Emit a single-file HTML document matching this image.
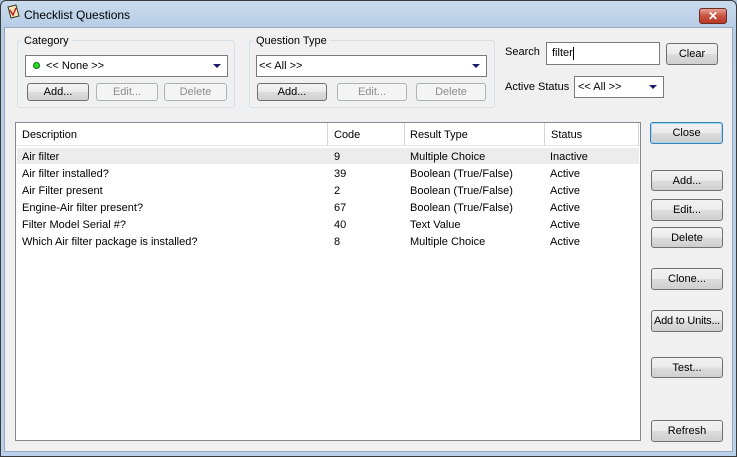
<!DOCTYPE html>
<html><head><style>
*{box-sizing:border-box;margin:0;padding:0}
body{width:737px;height:457px;overflow:hidden;font-family:"Liberation Sans",sans-serif;font-size:11px;color:#000;background:#a9c4de;position:relative}
.a{position:absolute}
#frame{left:0;top:0;width:737px;height:457px;border:1px solid #3a3a3a;border-radius:6px 6px 0 0;background:linear-gradient(#c9dbee,#b6cde6 27px,#b9d1ea)}
#client{left:4px;top:27px;width:729px;height:425px;background:#f0f0f0;border:1px solid #98a9bd}
.btn{position:absolute;border:1px solid #707070;border-radius:3px;background:linear-gradient(#f2f2f2 0,#ebebeb 50%,#dddddd 50%,#cfcfcf);text-align:center;font-size:11px;line-height:20px}
.dis{border-color:#adb2b5;background:#f4f4f4;color:#8d8d8d}
.grp{position:absolute;border:1px solid #d5dfe5;border-radius:3px}
.lbl{position:absolute;background:#f0f0f0;padding:0 3px;font-size:11px}
.combo{position:absolute;background:#fff;border:1px solid #7a7a7a;font-size:11px;line-height:21px;padding-left:5px}
.arr{position:absolute;right:6px;top:8px;width:0;height:0;border-left:4px solid transparent;border-right:4px solid transparent;border-top:4px solid #1a1a6a}
.row{position:absolute;left:17px;width:622px;height:17px;line-height:19px}
.row span{position:absolute}
.hd{position:absolute;top:0;height:23px;line-height:25px;border-right:1px solid #d5d5d5}
</style></head><body>
<div id="frame" class="a"></div>
<svg class="a" style="left:5px;top:4px" width="16" height="16" viewBox="0 0 16 16"><path d="M3 3 L11 1 L14 12 L6 14 Z" fill="#f3e7b5" stroke="#3b3b1b" stroke-width="1"/><path d="M5 6 L8 11 L11 4" fill="none" stroke="#c02020" stroke-width="1.5"/></svg>
<div class="a" style="left:24px;top:8px;font-size:12px;color:#000">Checklist Questions</div>
<div class="a" style="left:699px;top:8px;width:28px;height:16px;border:1px solid #6b2a22;border-radius:3px;background:linear-gradient(#e9a496,#c8513f 50%,#b83a28);color:#fff;font-weight:bold;font-size:12px;line-height:14px;text-align:center">✕</div>
<div id="client" class="a"></div>

<div class="grp" style="left:17px;top:40px;width:218px;height:68px"></div>
<div class="lbl" style="left:21px;top:35px">Category</div>
<div class="combo" style="left:25px;top:55px;width:203px;height:22px"><span style="display:inline-block;width:7px;height:7px;border-radius:50%;background:#22e022;border:1px solid #1a6a1a;margin:0 6px 0 2px"></span>&lt;&lt; None &gt;&gt;<div class="arr"></div></div>
<div class="btn" style="left:27px;top:83px;width:62px;height:18px;line-height:17px">Add...</div>
<div class="btn dis" style="left:96px;top:83px;width:62px;height:18px;line-height:17px">Edit...</div>
<div class="btn dis" style="left:164px;top:83px;width:63px;height:18px;line-height:17px">Delete</div>

<div class="grp" style="left:249px;top:40px;width:246px;height:68px"></div>
<div class="lbl" style="left:253px;top:35px">Question Type</div>
<div class="combo" style="left:256px;top:55px;width:231px;height:22px;padding-left:2px">&lt;&lt; All &gt;&gt;<div class="arr"></div></div>
<div class="btn" style="left:257px;top:83px;width:70px;height:18px;line-height:17px">Add...</div>
<div class="btn dis" style="left:337px;top:83px;width:70px;height:18px;line-height:17px">Edit...</div>
<div class="btn dis" style="left:416px;top:83px;width:70px;height:18px;line-height:17px">Delete</div>

<div class="a" style="left:505px;top:46px">Search</div>
<div class="combo" style="left:546px;top:42px;width:114px;height:23px;padding-left:5px;line-height:21px">filter<span style="display:inline-block;width:1px;height:13px;background:#000;vertical-align:middle"></span></div>
<div class="btn" style="left:666px;top:43px;width:52px;height:22px;line-height:21px">Clear</div>
<div class="a" style="left:505px;top:81px">Active Status</div>
<div class="combo" style="left:574px;top:76px;width:90px;height:22px;padding-left:3px">&lt;&lt; All &gt;&gt;<div class="arr"></div></div>

<div class="a" style="left:15px;top:122px;width:626px;height:319px;background:#fff;border:1px solid #828790"></div>
<div class="a" style="left:16px;top:123px;width:623px;height:23px;background:#fff;border-bottom:1px solid #e5e5e5">
<div class="hd" style="left:0;width:312px;padding-left:6px">Description</div>
<div class="hd" style="left:312px;width:77px;padding-left:6px">Code</div>
<div class="hd" style="left:389px;width:140px;padding-left:5px">Result Type</div>
<div class="hd" style="left:529px;width:94px;padding-left:6px">Status</div>
</div>
<div class="a" style="left:17px;top:148px;width:622px;height:16px;background:#ececec"></div>
<div class="row" style="top:148px"><span style="left:5px">Air filter</span><span style="left:317px">9</span><span style="left:393px">Multiple Choice</span><span style="left:533px">Inactive</span></div>
<div class="row" style="top:165px"><span style="left:5px">Air filter installed?</span><span style="left:317px">39</span><span style="left:393px">Boolean (True/False)</span><span style="left:533px">Active</span></div>
<div class="row" style="top:182px"><span style="left:5px">Air Filter present</span><span style="left:317px">2</span><span style="left:393px">Boolean (True/False)</span><span style="left:533px">Active</span></div>
<div class="row" style="top:199px"><span style="left:5px">Engine-Air filter present?</span><span style="left:317px">67</span><span style="left:393px">Boolean (True/False)</span><span style="left:533px">Active</span></div>
<div class="row" style="top:216px"><span style="left:5px">Filter Model Serial #?</span><span style="left:317px">40</span><span style="left:393px">Text Value</span><span style="left:533px">Active</span></div>
<div class="row" style="top:233px"><span style="left:5px">Which Air filter package is installed?</span><span style="left:317px">8</span><span style="left:393px">Multiple Choice</span><span style="left:533px">Active</span></div>

<div class="btn" style="left:650px;top:122px;width:73px;height:22px;line-height:20px;border-color:#3c7fb1;box-shadow:inset 0 0 0 1px #9ed8f6">Close</div>
<div class="btn" style="left:651px;top:170px;width:72px;height:21px">Add...</div>
<div class="btn" style="left:651px;top:199px;width:72px;height:22px">Edit...</div>
<div class="btn" style="left:651px;top:227px;width:72px;height:21px">Delete</div>
<div class="btn" style="left:651px;top:268px;width:72px;height:22px">Clone...</div>
<div class="btn" style="left:651px;top:310px;width:72px;height:22px;letter-spacing:-0.2px">Add to Units...</div>
<div class="btn" style="left:651px;top:357px;width:72px;height:21px">Test...</div>
<div class="btn" style="left:651px;top:420px;width:72px;height:22px">Refresh</div>
</body></html>
